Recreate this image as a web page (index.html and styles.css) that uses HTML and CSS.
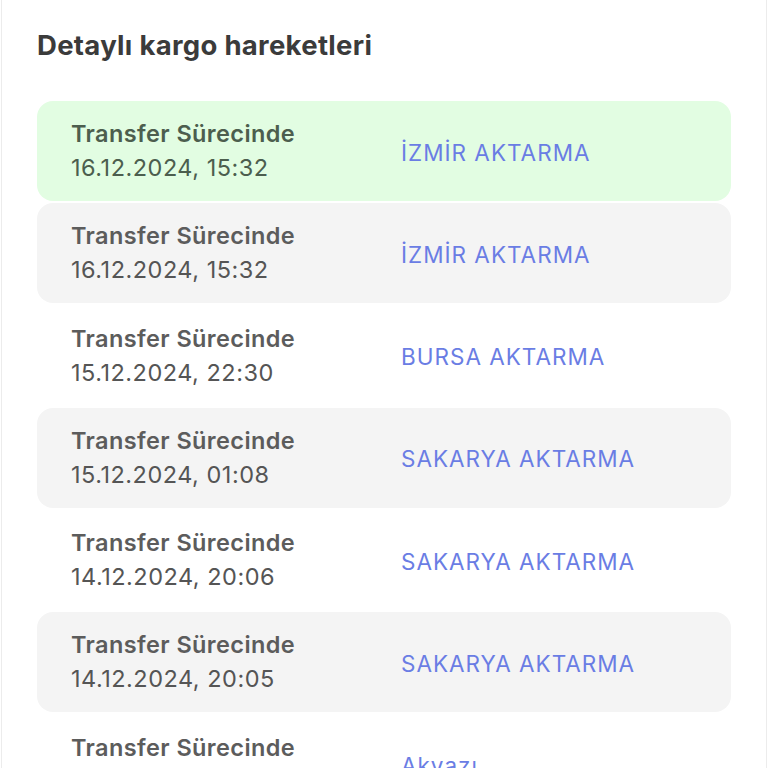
FILE: index.html
```html
<!DOCTYPE html>
<html lang="tr">

<head>
    <meta charset="UTF-8">
    <meta name="viewport" content="width=device-width, initial-scale=1.0">
    <title>Kargo Takip</title>
    <link rel="stylesheet" href="styles.css">
</head>

<body>
    <div class="panel">
        <h2>Detaylı kargo hareketleri</h2>

        <div class="moves">
            <div class="move current">
                <div class="move-info">
                    <div class="move-status">Transfer Sürecinde</div>
                    <div class="move-date">16.12.2024, 15:32</div>
                </div>
                <div class="move-place">İZMİR AKTARMA</div>
            </div>
            <div class="move shaded">
                <div class="move-info">
                    <div class="move-status">Transfer Sürecinde</div>
                    <div class="move-date">16.12.2024, 15:32</div>
                </div>
                <div class="move-place">İZMİR AKTARMA</div>
            </div>
            <div class="move">
                <div class="move-info">
                    <div class="move-status">Transfer Sürecinde</div>
                    <div class="move-date">15.12.2024, 22:30</div>
                </div>
                <div class="move-place">BURSA AKTARMA</div>
            </div>
            <div class="move shaded">
                <div class="move-info">
                    <div class="move-status">Transfer Sürecinde</div>
                    <div class="move-date">15.12.2024, 01:08</div>
                </div>
                <div class="move-place">SAKARYA AKTARMA</div>
            </div>
            <div class="move">
                <div class="move-info">
                    <div class="move-status">Transfer Sürecinde</div>
                    <div class="move-date">14.12.2024, 20:06</div>
                </div>
                <div class="move-place">SAKARYA AKTARMA</div>
            </div>
            <div class="move shaded">
                <div class="move-info">
                    <div class="move-status">Transfer Sürecinde</div>
                    <div class="move-date">14.12.2024, 20:05</div>
                </div>
                <div class="move-place">SAKARYA AKTARMA</div>
            </div>
            <div class="move">
                <div class="move-info">
                    <div class="move-status">Transfer Sürecinde</div>
                    <div class="move-date">14.12.2024, 19:41</div>
                </div>
                <div class="move-place">Akyazı</div>
            </div>
        </div>
    </div>
</body>

</html>
```

FILE: styles.css
```css
* {
    margin: 0;
    padding: 0;
    box-sizing: border-box;
}

body {
    font-family: 'Inter', 'Noto Sans', sans-serif;
    background: #ffffff;
    overflow: hidden;
}

.panel {
    margin: 0 1px;
    border-left: 1px solid #ececec;
    border-right: 1px solid #ececec;
    padding: 26px 35px 0 35px;
    min-height: 100vh;
}

h2 {
    font-size: 27.5px;
    font-weight: 700;
    color: #3b3b3b;
    letter-spacing: 0.3px;
    line-height: 38px;
    margin-bottom: 37px;
}

.moves {
    display: flex;
    flex-direction: column;
    gap: 2.3px;
}

.move {
    display: grid;
    grid-template-columns: 330px 1fr;
    align-items: center;
    padding: 16px 34px;
    border-radius: 16px;
    background: #ffffff;
}

.move.shaded {
    background: #f4f4f4;
}

.move.current {
    background: #e2fde2;
}

.move-status {
    font-size: 23.5px;
    font-weight: 600;
    line-height: 34px;
    letter-spacing: 0.4px;
    color: #5c5c5c;
}

.move-date {
    font-size: 23.5px;
    font-weight: 400;
    line-height: 34px;
    letter-spacing: 0.5px;
    color: #555555;
}

.move.current .move-status,
.move.current .move-date {
    color: #4c5e4e;
}

.move-place {
    font-size: 22.5px;
    color: #6a7de4;
    padding-top: 2px;
    letter-spacing: 1px;
}
```
